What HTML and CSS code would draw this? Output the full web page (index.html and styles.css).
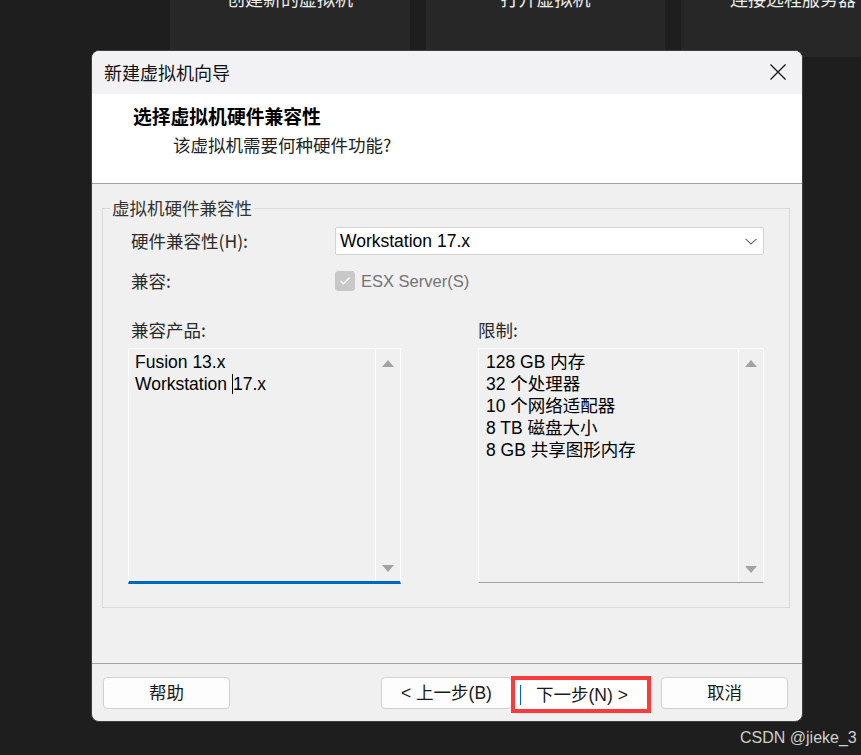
FILE: index.html
```html
<!DOCTYPE html>
<html lang="zh-CN">
<head>
<meta charset="utf-8">
<title>新建虚拟机向导</title>
<link rel="stylesheet" href="styles.css">
</head>
<body>
<div class="desktop">
  <div class="tiles">
    <div class="tile t1"><span class="tile-label">创建新的虚拟机</span></div>
    <div class="tile t2"><span class="tile-label">打开虚拟机</span></div>
    <div class="tile t3"><span class="tile-label">连接远程服务器</span></div>
  </div>

  <div class="dialog">
    <div class="titlebar">
      <span class="title">新建虚拟机向导</span>
      <svg class="close" width="18" height="18" viewBox="0 0 18 18"><path d="M1.5 1.5 L16.5 16.5 M16.5 1.5 L1.5 16.5" stroke="#1a1a1a" stroke-width="1.4" fill="none"/></svg>
    </div>
    <div class="header">
      <div class="heading">选择虚拟机硬件兼容性</div>
      <div class="subheading">该虚拟机需要何种硬件功能?</div>
    </div>
    <div class="body">
      <fieldset class="group">
        <legend>虚拟机硬件兼容性</legend>
        <div class="form">
          <span class="lbl">硬件兼容性(H):</span>
          <div class="combo">
            <span class="combo-text">Workstation 17.x</span>
            <svg width="12" height="7" viewBox="0 0 12 7"><path d="M0.5 0.8 L6 6 L11.5 0.8" stroke="#6a6a6a" stroke-width="1.1" fill="none"/></svg>
          </div>
          <span class="lbl">兼容:</span>
          <div class="check-row">
            <span class="checkbox"><svg width="12" height="10" viewBox="0 0 12 10"><path d="M1.5 5 L4.5 8 L10.5 1.5" stroke="#fff" stroke-width="1.2" fill="none"/></svg></span>
            <span class="check-text">ESX Server(S)</span>
          </div>
        </div>
        <div class="lists">
          <div class="col col-left">
            <span class="col-label">兼容产品:</span>
            <div class="listbox focused">
              <div class="items">
                <div>Fusion 13.x</div>
                <div>Workstation <span class="caret"></span>17.x</div>
              </div>
              <div class="scroll"><span class="arr up"></span><span class="arr down"></span></div>
            </div>
          </div>
          <div class="col col-right">
            <span class="col-label">限制:</span>
            <div class="listbox">
              <div class="items">
                <div>128 GB 内存</div>
                <div>32 个处理器</div>
                <div>10 个网络适配器</div>
                <div>8 TB 磁盘大小</div>
                <div>8 GB 共享图形内存</div>
              </div>
              <div class="scroll"><span class="arr up"></span><span class="arr down"></span></div>
            </div>
          </div>
        </div>
      </fieldset>
    </div>
    <div class="footer">
      <button class="btn btn-help">帮助</button>
      <span class="spacer"></span>
      <button class="btn btn-prev">&lt; 上一步(B)</button>
      <span class="mark"><button class="btn btn-next"><span class="caret-blue"></span><span class="next-text">下一步(N) &gt;</span></button></span>
      <button class="btn btn-cancel">取消</button>
    </div>
  </div>

  <div class="watermark">CSDN @jieke_3</div>
</div>
</body>
</html>
```

FILE: styles.css
```css
html, body {
  margin: 0;
  padding: 0;
  background: #1e1e1e;
}

.desktop {
  position: relative;
  width: 861px;
  height: 755px;
  overflow: hidden;
  background: #1e1e1e;
  font-family: "Liberation Sans", "Noto Sans CJK SC", sans-serif;
}

.tiles {
  display: flex;
  padding-left: 170px;
  gap: 16px;
  height: 57px;
}

.tile {
  height: 57px;
  background: #272727;
  color: #ececec;
  font-family: "Noto Sans CJK SC", sans-serif;
  font-size: 18px;
  text-align: center;
}
.t1 { width: 240px; }
.t2 { width: 239px; }
.t3 { flex: 1; text-align: left; padding-left: 49px; }

.tile-label {
  display: block;
  line-height: 24px;
  margin-top: -14px;
  white-space: nowrap;
}

.dialog {
  position: absolute;
  left: 91px;
  top: 50px;
  width: 712px;
  height: 672px;
  box-sizing: border-box;
  border: 1px solid #3e3e3e;
  border-radius: 8px;
  overflow: hidden;
  background: #f0f0f0;
  display: flex;
  flex-direction: column;
  color: #1a1a1a;
}

.titlebar {
  height: 43px;
  flex: none;
  background: #f2f2f5;
  display: flex;
  align-items: center;
  justify-content: space-between;
  padding: 0 15px 0 12px;
}

.title {
  font-family: "Noto Sans CJK SC", sans-serif;
  font-size: 18px;
  line-height: 24px;
  color: #111;
  margin-top: -1px;
}

.close { display: block; margin-top: -1px; }

.header {
  flex: none;
  box-sizing: border-box;
  background: #ffffff;
  border-bottom: 1px solid #a3a3a3;
  height: 90px;
  padding-top: 10px;
}

.heading {
  font-family: "Noto Sans CJK SC", sans-serif;
  font-weight: 700;
  font-size: 18.8px;
  line-height: 24px;
  padding-left: 41px;
  color: #000;
}

.subheading {
  font-family: "Noto Sans CJK SC", sans-serif;
  font-size: 17.5px;
  line-height: 24px;
  padding-left: 81px;
  margin-top: 5px;
  color: #222;
}

.body {
  flex: 1;
  padding: 12px 12px 0 10px;
}

.group {
  margin: 0;
  padding: 0;
  box-sizing: border-box;
  height: 412px;
  border: 1px solid #dadada;
  min-width: 0;
}

.group legend {
  font-family: "Noto Sans CJK SC", sans-serif;
  font-size: 17.5px;
  line-height: 24px;
  padding: 0 2px;
  margin-left: 7px;
  color: #333;
}

.form {
  display: grid;
  grid-template-columns: 204px 429px;
  grid-auto-rows: 28px;
  row-gap: 12px;
  align-items: center;
  padding: 7px 0 0 28px;
}

.lbl, .col-label {
  font-family: "Noto Sans CJK SC", sans-serif;
  font-size: 17.5px;
  line-height: 22px;
  color: #2a2a2a;
}

.combo {
  height: 28px;
  box-sizing: border-box;
  background: #ffffff;
  border: 1px solid #d2d2d2;
  border-radius: 2px;
  display: flex;
  align-items: center;
  justify-content: space-between;
  padding: 0 6px 0 4px;
}

.combo-text {
  font-size: 17.5px;
  line-height: 22px;
  color: #000;
}

.combo svg { display: block; }

.check-row {
  display: flex;
  align-items: center;
  gap: 6px;
  height: 28px;
}

.checkbox {
  width: 20px;
  height: 20px;
  border-radius: 3px;
  background: #c8c8c8;
  display: flex;
  align-items: center;
  justify-content: center;
}
.checkbox svg { display: block; }

.check-text {
  font-size: 16.5px;
  line-height: 22px;
  color: #737373;
}

.lists {
  display: flex;
  gap: 77px;
  padding-left: 25px;
  margin-top: 24px;
}

.col {
  display: flex;
  flex-direction: column;
  gap: 7px;
}
.col-left { width: 273px; }
.col-left .col-label { padding-left: 3px; }
.col-right { width: 286px; }

.listbox {
  display: flex;
  height: 236px;
  box-sizing: border-box;
  border: 1px solid #ffffff;
  border-bottom: 1px solid #a0a0a0;
  background: #f0f0f0;
}
.listbox.focused { border-bottom: 3px solid #0067c0; }
.col-right .listbox { height: 235px; }

.items {
  flex: 1;
  padding: 2px 0 0 6px;
  font-size: 17.5px;
  line-height: 22px;
  color: #000;
  white-space: nowrap;
}
.col-right .items { padding-left: 7px; }

.caret {
  display: inline-block;
  width: 1px;
  height: 20px;
  background: #000;
  vertical-align: -4px;
}

.scroll {
  width: 25px;
  border-left: 1px solid #ffffff;
  display: flex;
  flex-direction: column;
  align-items: center;
  justify-content: space-between;
  padding: 11px 0 9px;
  box-sizing: border-box;
}

.arr {
  width: 0;
  height: 0;
  border-left: 6px solid transparent;
  border-right: 6px solid transparent;
}
.arr.up { border-bottom: 7px solid #a3a3a3; }
.arr.down { border-top: 7px solid #a3a3a3; }

.footer {
  flex: none;
  height: 58px;
  box-sizing: border-box;
  border-top: 1px solid #a3a3a3;
  display: flex;
  align-items: flex-start;
  padding: 13px 14px 0 11px;
}

.spacer { flex: 1; }

.btn {
  height: 32px;
  box-sizing: border-box;
  background: #fdfdfd;
  border: 1px solid #d0d0d0;
  border-radius: 4px;
  font-family: "Liberation Sans", "Noto Sans CJK SC", sans-serif;
  font-size: 17.5px;
  line-height: 22px;
  color: #1a1a1a;
  display: flex;
  align-items: center;
  justify-content: center;
  padding: 0;
  margin: 0;
}

.btn-help { width: 127px; }
.btn-prev { width: 131px; }

.mark {
  display: block;
  border: 4px solid #fc3a3a;
  margin: -1px 0 0 -1px;
  background: #ffffff;
}

.btn-next {
  width: 132px;
  height: 29px;
  border: none;
  border-radius: 0;
  background: #ffffff;
  justify-content: flex-start;
  padding-left: 5px;
}

.btn-cancel { width: 127px; margin-left: 10px; }

.caret-blue {
  width: 1px;
  height: 20px;
  background: #0067c0;
}
.next-text { margin-left: 15px; }

.watermark {
  position: absolute;
  left: 740px;
  top: 728px;
  font-size: 16px;
  line-height: 20px;
  color: #cfcfcf;
}
```
